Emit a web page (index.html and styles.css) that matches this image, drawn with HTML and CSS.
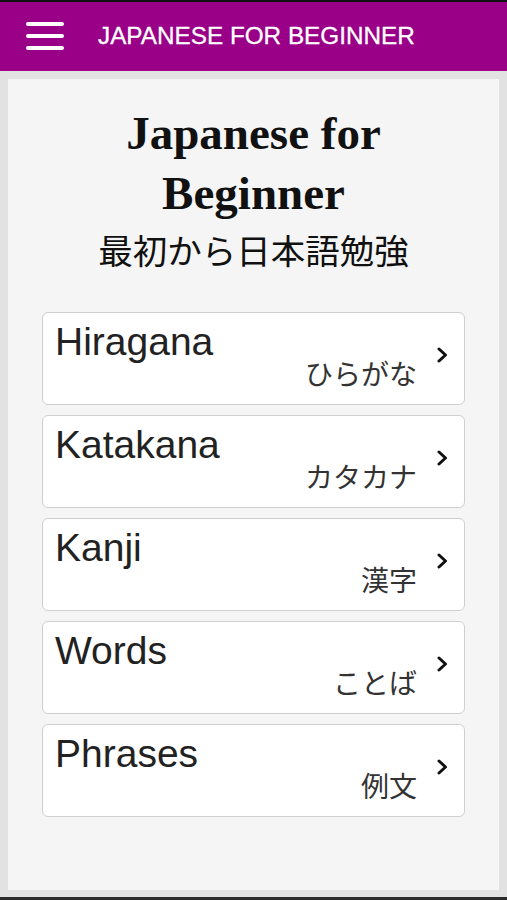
FILE: index.html
```html
<!DOCTYPE html>
<html lang="ja">
<head>
<meta charset="utf-8">
<title>Japanese for Beginner</title>
<link rel="stylesheet" href="styles.css">
</head>
<body>
<div class="topline"></div>
<header class="appbar">
  <svg class="hamburger" width="38" height="28" viewBox="0 0 38 28" aria-hidden="true">
    <g stroke="#fff" stroke-width="4" stroke-linecap="round">
      <line x1="2" y1="2" x2="36" y2="2"/>
      <line x1="2" y1="14" x2="36" y2="14"/>
      <line x1="2" y1="26" x2="36" y2="26"/>
    </g>
  </svg>
  <span class="appbar-title">JAPANESE FOR BEGINNER</span>
</header>
<main class="panel">
  <h1 class="title">Japanese for Beginner</h1>
  <p class="subtitle">最初から日本語勉強</p>
  <ul class="menu">
    <li class="card"><div class="card-text"><span class="en">Hiragana</span><span class="ja">ひらがな</span></div><svg class="chev" width="11" height="16" viewBox="0 0 11 16"><path d="M2 2 L8.5 8 L2 14" fill="none" stroke="#111" stroke-width="3" stroke-linecap="round" stroke-linejoin="round"/></svg></li>
    <li class="card"><div class="card-text"><span class="en">Katakana</span><span class="ja">カタカナ</span></div><svg class="chev" width="11" height="16" viewBox="0 0 11 16"><path d="M2 2 L8.5 8 L2 14" fill="none" stroke="#111" stroke-width="3" stroke-linecap="round" stroke-linejoin="round"/></svg></li>
    <li class="card"><div class="card-text"><span class="en">Kanji</span><span class="ja">漢字</span></div><svg class="chev" width="11" height="16" viewBox="0 0 11 16"><path d="M2 2 L8.5 8 L2 14" fill="none" stroke="#111" stroke-width="3" stroke-linecap="round" stroke-linejoin="round"/></svg></li>
    <li class="card"><div class="card-text"><span class="en">Words</span><span class="ja">ことば</span></div><svg class="chev" width="11" height="16" viewBox="0 0 11 16"><path d="M2 2 L8.5 8 L2 14" fill="none" stroke="#111" stroke-width="3" stroke-linecap="round" stroke-linejoin="round"/></svg></li>
    <li class="card"><div class="card-text"><span class="en">Phrases</span><span class="ja">例文</span></div><svg class="chev" width="11" height="16" viewBox="0 0 11 16"><path d="M2 2 L8.5 8 L2 14" fill="none" stroke="#111" stroke-width="3" stroke-linecap="round" stroke-linejoin="round"/></svg></li>
  </ul>
</main>
<div class="bottomline"></div>
</body>
</html>
```
FILE: styles.css
```css
html, body {
  margin: 0;
  padding: 0;
}
body {
  width: 507px;
  height: 900px;
  overflow: hidden;
  background: #e2e2e2;
  font-family: "Liberation Sans", Arial, sans-serif;
  display: flex;
  flex-direction: column;
}
.topline {
  height: 2px;
  background: #111;
  flex: none;
}
.appbar {
  flex: none;
  height: 69px;
  background: #990087;
  display: flex;
  align-items: center;
  padding-left: 26px;
  box-sizing: border-box;
}
.hamburger {
  display: block;
  margin-top: -2px;
}
.appbar-title {
  margin-left: 34px;
  color: #fff;
  font-size: 24.3px;
  line-height: 1;
  -webkit-text-stroke: 0.3px #fff;
}
.panel {
  flex: none;
  margin: 8px 8px 0;
  height: 811px;
  background: #f5f5f5;
  box-sizing: border-box;
  padding: 24px 34px 0;
}
.title {
  margin: 0;
  text-align: center;
  font-family: "Liberation Serif", "Times New Roman", serif;
  font-weight: bold;
  font-size: 47px;
  line-height: 60px;
  color: #111;
}
.subtitle {
  margin: 6px 0 0;
  text-align: center;
  font-family: "Noto Sans CJK JP", sans-serif;
  font-size: 34.5px;
  line-height: 40px;
  color: #111;
}
.menu {
  list-style: none;
  margin: 43px 0 0;
  padding: 0;
  display: flex;
  flex-direction: column;
  gap: 10px;
}
.card {
  height: 93px;
  box-sizing: border-box;
  background: #fff;
  border: 1.5px solid #cfcfcf;
  border-radius: 6px;
  display: flex;
  align-items: center;
  padding: 0 16px 0 12px;
}
.card-text {
  flex: 1;
  display: flex;
  flex-direction: column;
  margin-top: -6px;
}
.en {
  font-size: 39px;
  line-height: 36px;
  color: #222;
}
.ja {
  align-self: flex-end;
  font-family: "Noto Sans CJK JP", sans-serif;
  font-size: 28px;
  line-height: 28px;
  color: #333;
  margin-right: -3px;
  margin-top: -1px;
}
.chev {
  display: block;
  margin-left: 23px;
  margin-top: -7px;
  flex: none;
}
.bottomline {
  margin-top: auto;
  height: 3px;
  background: #2b2b2b;
  flex: none;
}
```
